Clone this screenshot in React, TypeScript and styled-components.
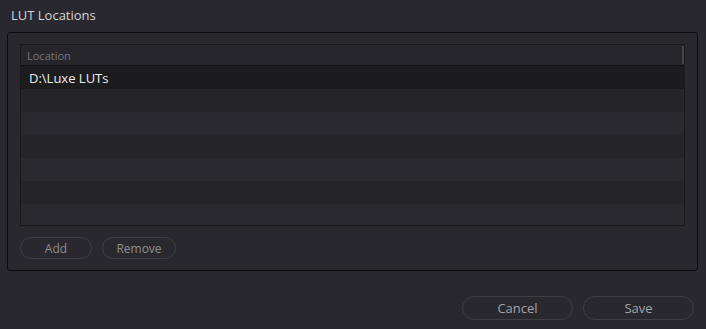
import React from "react";
import styled, { createGlobalStyle } from "styled-components";

const GlobalStyle = createGlobalStyle`
  html, body {
    margin: 0;
    padding: 0;
    background: #28282e;
    font-family: "Open Sans", "Noto Sans", sans-serif;
  }
`;

const Page = styled.div`
  width: 706px;
  height: 329px;
  background: #28282e;
  display: flex;
  flex-direction: column;
`;

const Title = styled.div`
  height: 32px;
  box-sizing: border-box;
  padding: 6px 0 0 11px;
  font-size: 13px;
  line-height: 18px;
  color: #d6d6d8;
`;

const Panel = styled.div`
  margin: 0 8px 0 7px;
  height: 239px;
  box-sizing: border-box;
  border: 1px solid #0c0c0e;
  border-radius: 3px;
  padding: 11px 12px 0 12px;
  display: flex;
  flex-direction: column;
`;

const Table = styled.div`
  height: 182px;
  box-sizing: border-box;
  border: 1px solid #1a1a1d;
  display: flex;
  flex-direction: column;
  overflow: hidden;
`;

const Header = styled.div`
  height: 21px;
  flex: none;
  box-sizing: border-box;
  border-bottom: 1px solid #111113;
  background: #26252b;
  display: flex;
  align-items: center;
  padding-left: 6px;
  font-size: 11px;
  color: #76767a;
  position: relative;
  &::after {
    content: "";
    position: absolute;
    right: 0;
    top: 1px;
    bottom: 1px;
    width: 2px;
    background: #45454b;
  }
`;

const Body = styled.div`
  flex: 1;
  overflow: hidden;
`;

const Row = styled.div<{ $tone: "sel" | "a" | "b" }>`
  height: 23px;
  display: flex;
  align-items: center;
  padding-left: 8px;
  font-size: 13px;
  color: #ececee;
  background: ${(p) =>
    p.$tone === "sel" ? "#1c1c1f" : p.$tone === "a" ? "#242429" : "#29292f"};
`;

const Actions = styled.div`
  display: flex;
  gap: 10px;
  margin-top: 11px;
`;

const Pill = styled.button<{ $w: number; $h: number }>`
  width: ${(p) => p.$w}px;
  height: ${(p) => p.$h}px;
  box-sizing: border-box;
  border: 1px solid #3e3e44;
  border-radius: 999px;
  background: transparent;
  color: #8e8e92;
  font-family: "Open Sans", "Noto Sans", sans-serif;
  font-size: 12px;
  padding: 0;
  display: flex;
  align-items: center;
  justify-content: center;
`;

const Footer = styled.div`
  display: flex;
  justify-content: flex-end;
  gap: 10px;
  padding: 25px 12px 0 0;
`;

const FooterButton = styled(Pill)`
  font-size: 13px;
  color: #a4a4a8;
`;

const rows: { text: string; tone: "sel" | "a" | "b" }[] = [
  { text: "D:\\Luxe LUTs", tone: "sel" },
  { text: "", tone: "a" },
  { text: "", tone: "b" },
  { text: "", tone: "a" },
  { text: "", tone: "b" },
  { text: "", tone: "a" },
  { text: "", tone: "b" },
];

export default function App() {
  return (
    <Page>
      <GlobalStyle />
      <Title>LUT Locations</Title>
      <Panel>
        <Table>
          <Header>Location</Header>
          <Body>
            {rows.map((r, i) => (
              <Row key={i} $tone={r.tone}>
                {r.text}
              </Row>
            ))}
          </Body>
        </Table>
        <Actions>
          <Pill $w={72} $h={22}>Add</Pill>
          <Pill $w={74} $h={22}>Remove</Pill>
        </Actions>
      </Panel>
      <Footer>
        <FooterButton $w={111} $h={24}>Cancel</FooterButton>
        <FooterButton $w={111} $h={24}>Save</FooterButton>
      </Footer>
    </Page>
  );
}
